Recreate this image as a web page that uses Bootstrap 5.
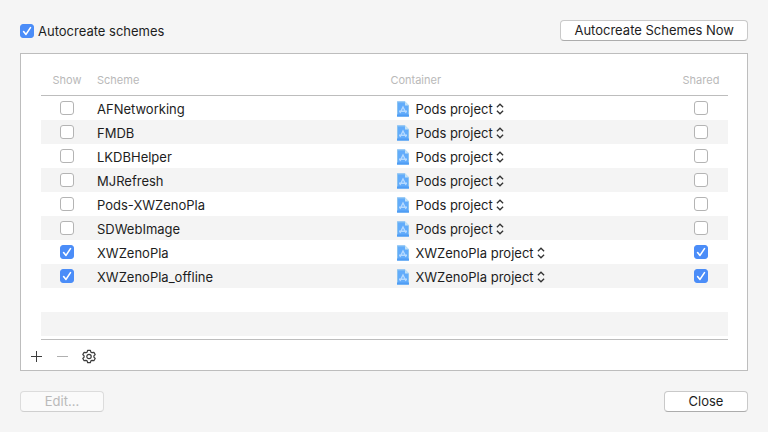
<!DOCTYPE html>
<html lang="en">
<head>
<meta charset="utf-8">
<meta name="viewport" content="width=device-width, initial-scale=1">
<title>Manage Schemes</title>
<link href="https://cdn.jsdelivr.net/npm/bootstrap@5.3.0/dist/css/bootstrap.min.css" rel="stylesheet">
<style>
  body { background: #f5f5f5; color: #1d1d1d; font: 13px/16px Inter, "Liberation Sans", sans-serif; }
  .mac-btn { min-width: 84px; height: 21px; padding: 0 13px; font-size: 13px; line-height: 19px; color: #1d1d1d;
    background: #fff; border: 1px solid #c9c9c9; border-bottom-color: #acacac; border-radius: 4px; }
  .mac-btn:disabled { color: #b9b9b9; background: #fafafa; border-color: #dcdcdc; border-bottom-color: #cfcfcf; opacity: 1; }
  .form-check-input.tick { flex: none; width: 14px; height: 14px; margin: 0; border: 1px solid #b4b4b4; border-radius: 3px; background-color: #fff; }
  .form-check-input.tick:checked { background-color: #4b8df8; border-color: #4b8df8; background-size: 14px 14px; background-origin: border-box;
    background-image: url("data:image/svg+xml,%3Csvg xmlns='http://www.w3.org/2000/svg' viewBox='0 0 14 14'%3E%3Cpath d='M3.6 7.5 6 10.4 10.5 3.6' fill='none' stroke='%23fff' stroke-width='1.6' stroke-linecap='round' stroke-linejoin='round'/%3E%3C/svg%3E"); }
  .panel { background: #fff; border: 1px solid #bdbdbd; }
  .scheme-grid { table-layout: fixed; border-collapse: separate; border-spacing: 0; border-bottom: 1px solid #bdbdbd; }
  .scheme-grid th { height: 23px; padding: 0 4px; font-size: 11px; font-weight: 400; line-height: 14px; color: #b9b9b9; vertical-align: top; border-bottom: 1px solid #bdbdbd; }
  .scheme-grid td { height: 24px; padding: 0 4px; line-height: 16px; vertical-align: middle; }
  .scheme-grid td label { padding-top: 2px; }
  .scheme-grid tbody tr:nth-child(even) { background: #f4f4f4; }
  .scheme-grid .tick { display: block; margin: 0 auto; }
  .col-tick { width: 52px; }
  .col-shared { width: 54px; }
  .col-name { width: 43%; }
  .scheme-grid th.where { padding-left: 2px; }
  .scheme-grid td.where { padding-left: 9px; padding-top: 2px; }
  .doc { width: 12px; height: 16px; }
  .popup { height: 18px; margin-left: 6px; padding: 1px 11px 1px 0; border: 0; appearance: none; color: inherit; font: inherit;
    background: url("data:image/svg+xml,%3Csvg xmlns='http://www.w3.org/2000/svg' viewBox='0 0 8 12'%3E%3Cpath d='M.9 4.2 4 1.2 7.1 4.2M.9 7.8 4 10.8 7.1 7.8' fill='none' stroke='%23333' stroke-width='1.3'/%3E%3C/svg%3E") right 3px / 8px 12px no-repeat; }
  .scheme-grid td.spare { height: 3px; }
  .tool { width: 16px; height: 16px; padding: 0; border: 0; background: none; color: #3c3c3c; line-height: 0; }
  .tool:disabled { color: #b0b0b0; }
  .table-area { padding: 19px 19px 0 20px; }
  .tools { padding: 8px 8px 6px; gap: 10px; }
  .sheet { padding: 20px 20px 19px; }
  .top-row { margin-bottom: 12px; }
  .bottom-row { margin-top: 20px; }
</style>
<script src="https://cdn.jsdelivr.net/npm/bootstrap@5.3.0/dist/js/bootstrap.bundle.min.js"></script>
</head>
<body>
<svg class="d-none" aria-hidden="true">
  <symbol id="doc" viewBox="0 0 12 16">
    <path d="M0 .5H8L12 4.5V15.5H0Z" fill="#62acfb"/>
    <path d="M.5 1H8L11.5 4.5V15H.5Z" fill="none" stroke="#8cc4f0"/>
    <path d="M8 .5 12 4.5H8Z" fill="#c3e2f5"/>
    <path d="M0 13.5H12V15.5H0Z" fill="#4f9df5"/>
    <path d="M3 12 6 6 9 12M2 10.2H10" fill="none" stroke="#b4d9ff" stroke-width="1.4"/>
  </symbol>
</svg>
<main class="sheet">
  <div class="top-row d-flex justify-content-between align-items-center">
    <div class="d-flex align-items-center">
      <input class="form-check-input tick" type="checkbox" id="auto" checked>
      <label class="ps-1" for="auto">Autocreate schemes</label>
    </div>
    <button type="button" class="mac-btn">Autocreate Schemes Now</button>
  </div>

  <section class="panel">
    <div class="table-area">
      <table class="scheme-grid w-100">
        <colgroup><col class="col-tick"><col class="col-name"><col><col class="col-shared"></colgroup>
        <thead>
          <tr><th scope="col" class="px-0 text-center">Show</th><th scope="col">Scheme</th><th scope="col" class="where">Container</th><th scope="col" class="px-0 text-center">Shared</th></tr>
        </thead>
        <tbody>
          <tr><td><input class="form-check-input tick" type="checkbox" id="s1"></td><td><label class="d-block" for="s1">AFNetworking</label></td><td class="where"><div class="d-flex align-items-center"><svg class="doc"><use href="#doc"/></svg><select class="popup" aria-label="Container of AFNetworking"><option>Pods project</option></select></div></td><td><input class="form-check-input tick" type="checkbox" aria-label="Share AFNetworking"></td></tr>
          <tr><td><input class="form-check-input tick" type="checkbox" id="s2"></td><td><label class="d-block" for="s2">FMDB</label></td><td class="where"><div class="d-flex align-items-center"><svg class="doc"><use href="#doc"/></svg><select class="popup" aria-label="Container of FMDB"><option>Pods project</option></select></div></td><td><input class="form-check-input tick" type="checkbox" aria-label="Share FMDB"></td></tr>
          <tr><td><input class="form-check-input tick" type="checkbox" id="s3"></td><td><label class="d-block" for="s3">LKDBHelper</label></td><td class="where"><div class="d-flex align-items-center"><svg class="doc"><use href="#doc"/></svg><select class="popup" aria-label="Container of LKDBHelper"><option>Pods project</option></select></div></td><td><input class="form-check-input tick" type="checkbox" aria-label="Share LKDBHelper"></td></tr>
          <tr><td><input class="form-check-input tick" type="checkbox" id="s4"></td><td><label class="d-block" for="s4">MJRefresh</label></td><td class="where"><div class="d-flex align-items-center"><svg class="doc"><use href="#doc"/></svg><select class="popup" aria-label="Container of MJRefresh"><option>Pods project</option></select></div></td><td><input class="form-check-input tick" type="checkbox" aria-label="Share MJRefresh"></td></tr>
          <tr><td><input class="form-check-input tick" type="checkbox" id="s5"></td><td><label class="d-block" for="s5">Pods-XWZenoPla</label></td><td class="where"><div class="d-flex align-items-center"><svg class="doc"><use href="#doc"/></svg><select class="popup" aria-label="Container of Pods-XWZenoPla"><option>Pods project</option></select></div></td><td><input class="form-check-input tick" type="checkbox" aria-label="Share Pods-XWZenoPla"></td></tr>
          <tr><td><input class="form-check-input tick" type="checkbox" id="s6"></td><td><label class="d-block" for="s6">SDWebImage</label></td><td class="where"><div class="d-flex align-items-center"><svg class="doc"><use href="#doc"/></svg><select class="popup" aria-label="Container of SDWebImage"><option>Pods project</option></select></div></td><td><input class="form-check-input tick" type="checkbox" aria-label="Share SDWebImage"></td></tr>
          <tr><td><input class="form-check-input tick" type="checkbox" id="s7" checked></td><td><label class="d-block" for="s7">XWZenoPla</label></td><td class="where"><div class="d-flex align-items-center"><svg class="doc"><use href="#doc"/></svg><select class="popup" aria-label="Container of XWZenoPla"><option>XWZenoPla project</option></select></div></td><td><input class="form-check-input tick" type="checkbox" aria-label="Share XWZenoPla" checked></td></tr>
          <tr><td><input class="form-check-input tick" type="checkbox" id="s8" checked></td><td><label class="d-block" for="s8">XWZenoPla_offline</label></td><td class="where"><div class="d-flex align-items-center"><svg class="doc"><use href="#doc"/></svg><select class="popup" aria-label="Container of XWZenoPla_offline"><option>XWZenoPla project</option></select></div></td><td><input class="form-check-input tick" type="checkbox" aria-label="Share XWZenoPla_offline" checked></td></tr>
          <tr><td colspan="4"></td></tr>
          <tr><td colspan="4"></td></tr>
        </tbody>
        <tfoot><tr><td colspan="4" class="spare p-0"></td></tr></tfoot>
      </table>
    </div>
    <div class="tools d-flex align-items-center">
      <button type="button" class="tool" aria-label="Add scheme"><svg width="16" height="16" viewBox="0 0 16 16" fill="none" stroke="currentColor"><path d="M2 8.5H13M7.5 3V14"/></svg></button>
      <button type="button" class="tool" aria-label="Remove scheme" disabled><svg width="16" height="16" viewBox="0 0 16 16" fill="none" stroke="currentColor"><path d="M2 8.5H13"/></svg></button>
      <button type="button" class="tool" aria-label="Scheme actions"><svg width="16" height="16" viewBox="0 0 16 16" fill="none" stroke="currentColor" stroke-width="1.2" stroke-linejoin="round"><path d="M6.7 2.3H9.3L9.9 4.1 11 4.7 12.9 4.3 14.2 6.5 12.9 7.9V9.1L14.2 10.5 12.9 12.7 11 12.3 9.9 12.9 9.3 14.7H6.7L6.1 12.9 5 12.3 3.1 12.7 1.8 10.5 3.1 9.1V7.9L1.8 6.5 3.1 4.3 5 4.7 6.1 4.1Z"/><circle cx="8" cy="8.5" r="2.2"/></svg></button>
    </div>
  </section>

  <div class="bottom-row d-flex justify-content-between">
    <button type="button" class="mac-btn" disabled>Edit...</button>
    <button type="button" class="mac-btn">Close</button>
  </div>
</main>
</body>
</html>
